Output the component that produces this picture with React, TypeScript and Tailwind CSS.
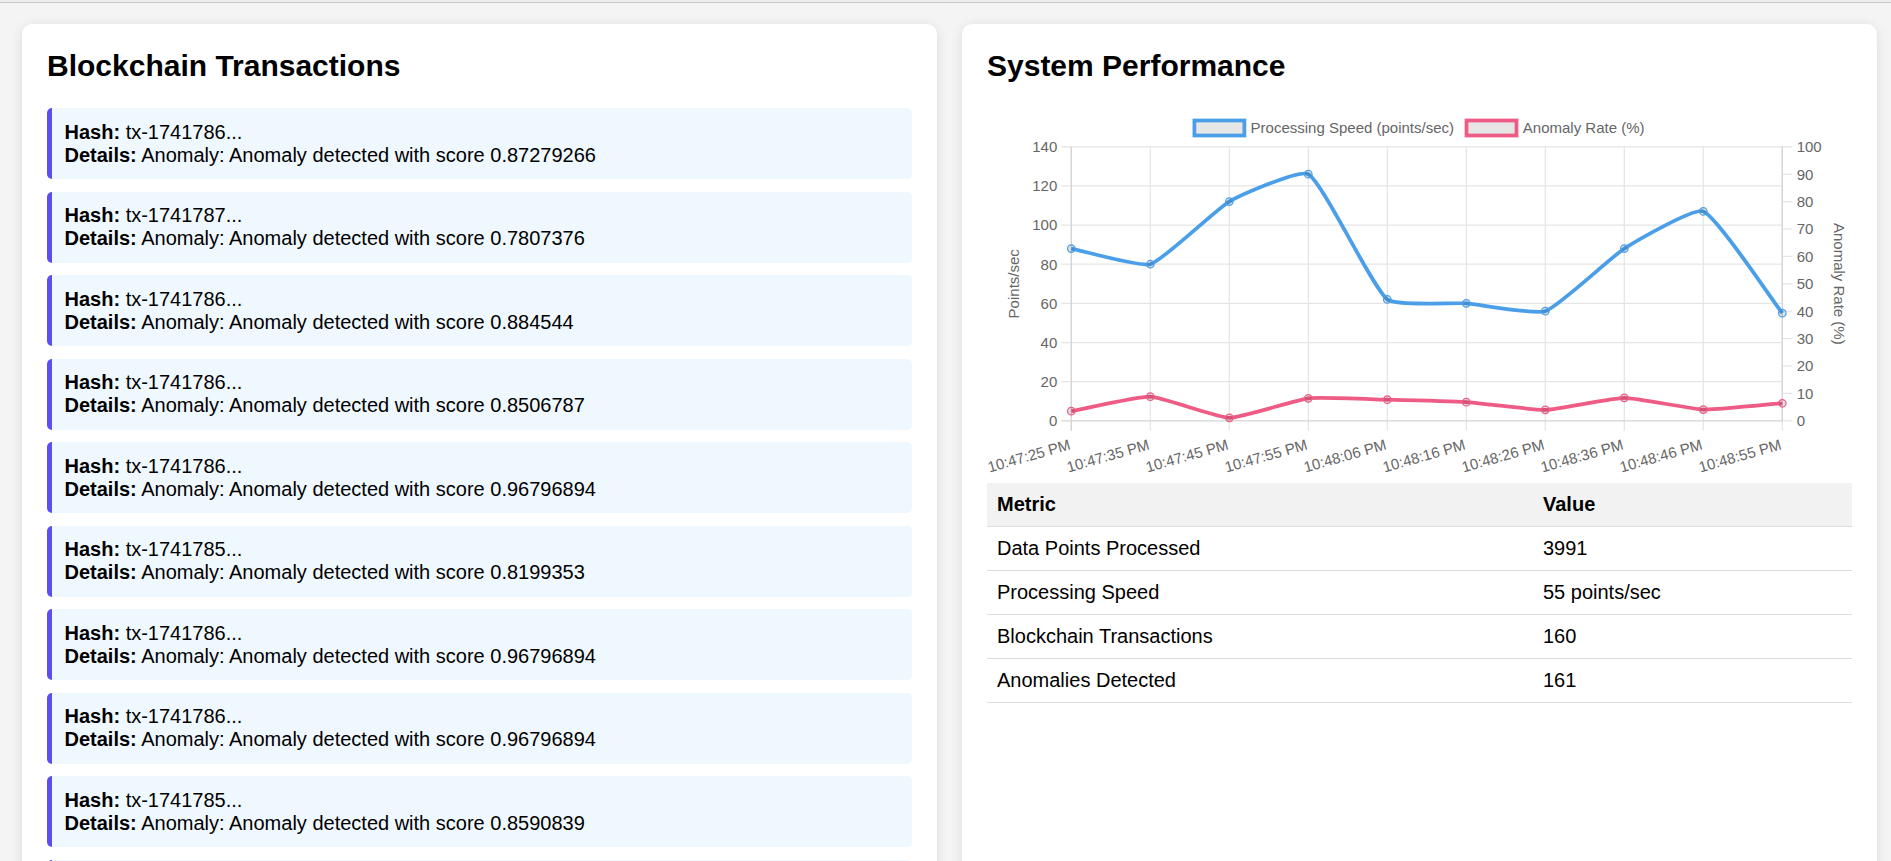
import React from 'react';

type Pt = { x: number; y: number };

const transactions = [
  { hash: 'tx-1741786...', score: '0.87279266' },
  { hash: 'tx-1741787...', score: '0.7807376' },
  { hash: 'tx-1741786...', score: '0.884544' },
  { hash: 'tx-1741786...', score: '0.8506787' },
  { hash: 'tx-1741786...', score: '0.96796894' },
  { hash: 'tx-1741785...', score: '0.8199353' },
  { hash: 'tx-1741786...', score: '0.96796894' },
  { hash: 'tx-1741786...', score: '0.96796894' },
  { hash: 'tx-1741785...', score: '0.8590839' },
  { hash: 'tx-1741785...', score: '0.8199353' },
  { hash: 'tx-1741786...', score: '0.884544' },
];

const labels = [
  '10:47:25 PM',
  '10:47:35 PM',
  '10:47:45 PM',
  '10:47:55 PM',
  '10:48:06 PM',
  '10:48:16 PM',
  '10:48:26 PM',
  '10:48:36 PM',
  '10:48:46 PM',
  '10:48:55 PM',
];
const speed = [88, 80, 112, 126, 62, 60, 56, 88, 107, 55];
const anomaly = [3.5, 8.8, 1.1, 8.2, 7.7, 6.8, 4.0, 8.4, 4.1, 6.4];

const metrics = [
  { label: 'Data Points Processed', value: '3991' },
  { label: 'Processing Speed', value: '55 points/sec' },
  { label: 'Blockchain Transactions', value: '160' },
  { label: 'Anomalies Detected', value: '161' },
];

// chart area inside the 865x375 canvas
const area = { left: 84.3, right: 795.3, top: 38.8, bottom: 312.8 };
const step = 79;

// same spline as chart.js, control points capped to the area
function linePath(pts: Pt[], t = 0.15) {
  const clamp = (p: Pt) => ({
    x: Math.min(Math.max(p.x, area.left), area.right),
    y: Math.min(Math.max(p.y, area.top), area.bottom),
  });
  const cps = pts.map((cur, i) => {
    const prev = pts[i - 1] ?? cur;
    const next = pts[i + 1] ?? cur;
    const d01 = Math.hypot(cur.x - prev.x, cur.y - prev.y);
    const d12 = Math.hypot(next.x - cur.x, next.y - cur.y);
    const sum = d01 + d12;
    const fa = sum ? (t * d01) / sum : 0;
    const fb = sum ? (t * d12) / sum : 0;
    return {
      a: clamp({ x: cur.x - fa * (next.x - prev.x), y: cur.y - fa * (next.y - prev.y) }),
      b: clamp({ x: cur.x + fb * (next.x - prev.x), y: cur.y + fb * (next.y - prev.y) }),
    };
  });
  let d = `M${pts[0].x},${pts[0].y}`;
  for (let i = 1; i < pts.length; i++) {
    const c1 = cps[i - 1].b;
    const c2 = cps[i].a;
    d += ` C${c1.x},${c1.y} ${c2.x},${c2.y} ${pts[i].x},${pts[i].y}`;
  }
  return d;
}

function PerformanceChart() {
  const h = area.bottom - area.top;
  const yLeft = (v: number) => area.bottom - (v / 140) * h;
  const yRight = (v: number) => area.bottom - (v / 100) * h;
  const xs = labels.map((_, i) => area.left + i * step);
  const speedPts = speed.map((v, i) => ({ x: xs[i], y: yLeft(v) }));
  const anomalyPts = anomaly.map((v, i) => ({ x: xs[i], y: yRight(v) }));

  const blue = '#4a9fe8';
  const pink = '#ee5b84';

  return (
    <svg width={865} height={375} className="block">
      {/* legend */}
      <rect x={207.4} y={12.5} width={50} height={15} fill="#e6e6e6" stroke={blue} strokeWidth={3.75} />
      <text x={263.6} y={25.3} fontSize={15} fill="#666">
        Processing Speed (points/sec)
      </text>
      <rect x={479.5} y={12.5} width={50} height={15} fill="#e6e6e6" stroke={pink} strokeWidth={3.75} />
      <text x={535.8} y={25.3} fontSize={15} fill="#666">
        Anomaly Rate (%)
      </text>

      {/* vertical grid */}
      {xs.map((x, i) => (
        <line key={`v${i}`} x1={x} x2={x} y1={area.top} y2={area.bottom + 10} stroke="#e5e5e5" strokeWidth={1.25} />
      ))}
      {/* horizontal grid + left ticks */}
      {[0, 20, 40, 60, 80, 100, 120, 140].map((v) => (
        <g key={`l${v}`}>
          <line
            x1={area.left - 10}
            x2={area.right}
            y1={yLeft(v)}
            y2={yLeft(v)}
            stroke={v === 0 ? '#d4d4d4' : '#e5e5e5'}
            strokeWidth={1.25}
          />
          <text x={70.3} y={yLeft(v) + 5.3} fontSize={15} fill="#666" textAnchor="end">
            {v}
          </text>
        </g>
      ))}
      {/* right ticks */}
      {[0, 10, 20, 30, 40, 50, 60, 70, 80, 90, 100].map((v) => (
        <g key={`r${v}`}>
          <line x1={area.right} x2={area.right + 10} y1={yRight(v)} y2={yRight(v)} stroke="#e5e5e5" strokeWidth={1.25} />
          <text x={809.7} y={yRight(v) + 5.3} fontSize={15} fill="#666">
            {v}
          </text>
        </g>
      ))}
      <line x1={area.left} x2={area.left} y1={area.top} y2={area.bottom + 10} stroke="#d4d4d4" strokeWidth={1.25} />
      <line x1={area.right} x2={area.right} y1={area.top} y2={area.bottom} stroke="#d4d4d4" strokeWidth={1.25} />

      {/* axis titles */}
      <text x={32} y={175.8} fontSize={15} fill="#666" textAnchor="middle" transform="rotate(-90 32 175.8)">
        Points/sec
      </text>
      <text x={847} y={175.8} fontSize={15} fill="#666" textAnchor="middle" transform="rotate(90 847 175.8)">
        Anomaly Rate (%)
      </text>

      {/* x labels */}
      {labels.map((l, i) => (
        <text
          key={l}
          x={xs[i]}
          y={341}
          fontSize={15}
          fill="#666"
          textAnchor="end"
          transform={`rotate(-16 ${xs[i]} 341)`}
        >
          {l}
        </text>
      ))}

      {/* datasets */}
      <path d={linePath(anomalyPts)} fill="none" stroke={pink} strokeWidth={3.75} />
      {anomalyPts.map((p, i) => (
        <circle key={`a${i}`} cx={p.x} cy={p.y} r={3.75} fill="rgba(0,0,0,0.1)" stroke={pink} strokeWidth={1.25} />
      ))}
      <path d={linePath(speedPts)} fill="none" stroke={blue} strokeWidth={3.75} />
      {speedPts.map((p, i) => (
        <circle key={`s${i}`} cx={p.x} cy={p.y} r={3.75} fill="rgba(0,0,0,0.1)" stroke={blue} strokeWidth={1.25} />
      ))}
    </svg>
  );
}

export default function App() {
  return (
    <div className="h-screen overflow-hidden bg-[#f4f4f4] font-['Liberation_Sans',Arial,sans-serif] text-black">
      <div className="h-[3px] bg-[#efefef] border-b border-[#c6c6c6]" />
      <div className="grid grid-cols-[915px_915px] gap-[25px] pl-[22px] pt-[21px]">
        {/* Transactions */}
        <section className="bg-white rounded-[10px] shadow-[0_2px_12px_rgba(0,0,0,0.1)] p-[25px] min-h-[900px]">
          <h2 className="text-[30px] font-bold leading-[normal] mb-[25px]">Blockchain Transactions</h2>
          <div className="flex flex-col gap-[12.5px]">
            {transactions.map((tx, i) => (
              <div
                key={i}
                className="bg-[#f0f8ff] border-l-[5px] border-[#5b4ff2] rounded-[5px] p-[12.5px] text-[20px] leading-[23px]"
              >
                <div>
                  <span className="font-bold">Hash:</span> {tx.hash}
                </div>
                <div>
                  <span className="font-bold">Details:</span> Anomaly: Anomaly detected with score {tx.score}
                </div>
              </div>
            ))}
          </div>
        </section>

        {/* Performance */}
        <section className="bg-white rounded-[10px] shadow-[0_2px_12px_rgba(0,0,0,0.1)] p-[25px] min-h-[900px]">
          <h2 className="text-[30px] font-bold leading-[normal] mb-[25px]">System Performance</h2>
          <PerformanceChart />
          <table className="w-full border-collapse text-[20px] leading-[23px]">
            <thead>
              <tr className="bg-[#f2f2f2] border-b border-[#dddddd]">
                <th className="w-[546px] p-[10px] text-left font-bold">Metric</th>
                <th className="p-[10px] text-left font-bold">Value</th>
              </tr>
            </thead>
            <tbody>
              {metrics.map((m) => (
                <tr key={m.label} className="border-b border-[#dddddd]">
                  <td className="p-[10px]">{m.label}</td>
                  <td className="p-[10px]">{m.value}</td>
                </tr>
              ))}
            </tbody>
          </table>
        </section>
      </div>
    </div>
  );
}
